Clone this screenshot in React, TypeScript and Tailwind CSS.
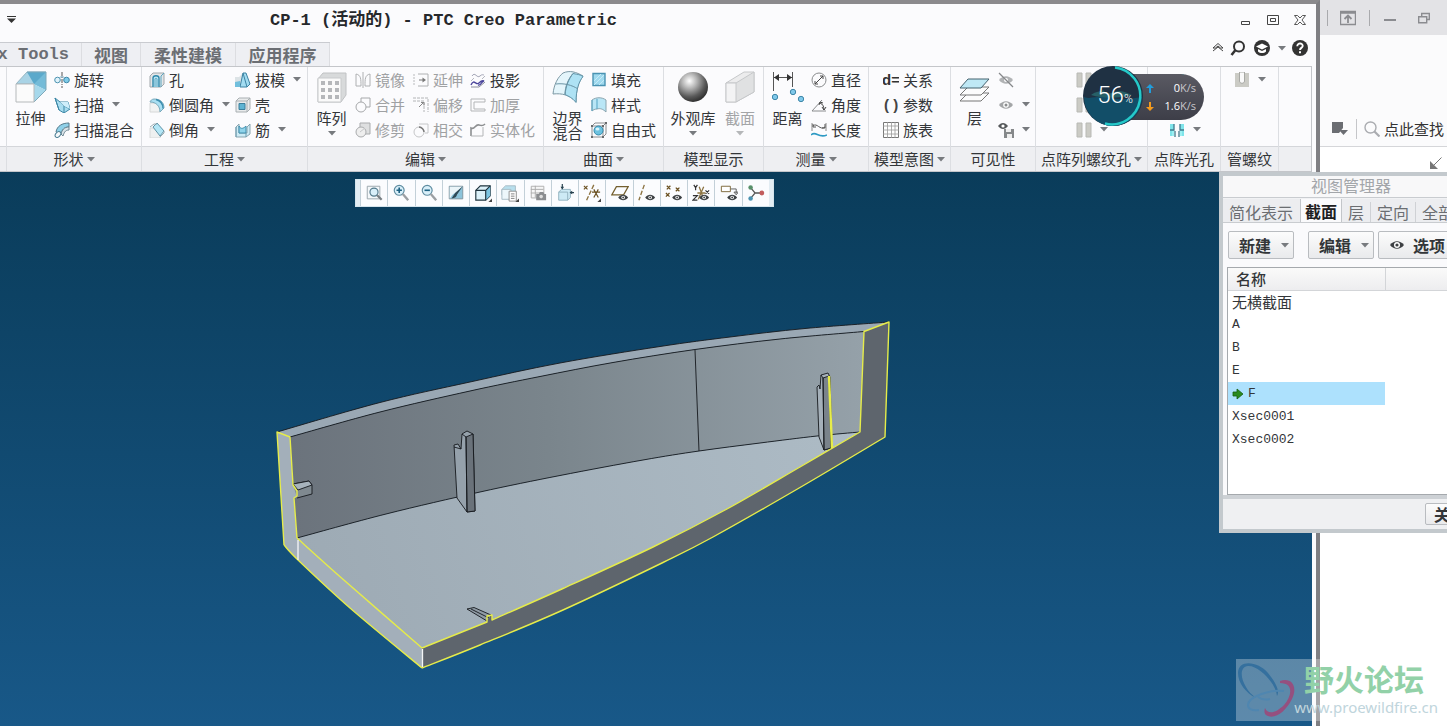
import type { ReactNode } from "react";

type Point = [number, number];

/* ---------- shared pieces ---------- */

function Caret({ className = "text-[#777a7e]" }: { className?: string }) {
  return (
    <svg width="8" height="5" viewBox="0 0 8 5" className={"shrink-0 " + className} aria-hidden="true">
      <path d="M0 0h8L4 4.6z" fill="currentColor" />
    </svg>
  );
}

function Ico({ children, size = 16, box = 16 }: { children: ReactNode; size?: number; box?: number }) {
  return (
    <svg width={size} height={size} viewBox={`0 0 ${box} ${box}`} fill="none" className="shrink-0" aria-hidden="true">
      {children}
    </svg>
  );
}

/* ---------- ribbon icons ---------- */

const small: Record<string, ReactNode> = {
  revolve: (
    <>
      <path d="M8 0v16" stroke="#555" strokeDasharray="4 1 1 1" />
      <circle cx="3.5" cy="8" r="2.8" fill="#dff2fa" stroke="#4b92b0" />
      <circle cx="12.5" cy="8" r="2.8" fill="#7fcbe8" stroke="#3c87a8" />
      <path d="M5.5 5.5C7 4.5 9 4.5 10.5 5.5" stroke="#7aa7bb" />
    </>
  ),
  sweep: (
    <>
      <path d="M1 1l5 4h8l2 7-6 4-5-3z" fill="#a9ddf0" stroke="#3b86a5" />
      <path d="M6 5l4 4 6 3M10 9l0 7M1 1l4 12" stroke="#3b86a5" />
      <path d="M6 5h8l2 7-6-3z" fill="#cfeefa" />
    </>
  ),
  blend: (
    <>
      <path d="M2 10C3 4 8 1 15 1v4C10 5 8 8 7 12z" fill="#8fd0e8" stroke="#55798a" />
      <path d="M7 12c1-4 3-7 8-7v3c-4 0-5 3-6 6z" fill="#d9e3e8" stroke="#6d8793" />
      <ellipse cx="4" cy="12.5" rx="3.3" ry="2.3" transform="rotate(-45 4 12.500)" fill="#f4f8fa" stroke="#4b7d93" />
    </>
  ),
  hole: (
    <>
      <path d="M1 4l3-3h11v11l-3 3H1z" fill="#e3e6e8" stroke="#a0a6aa" />
      <path d="M4 15V6c0-3 6-3 6 0v9" fill="#bfe8f6" stroke="#2f89ab" strokeWidth="1.400" />
      <path d="M6 15V7c0-1 2-1 2 0v8M12 4v11M12 4l3-3" stroke="#5aa5c0" />
    </>
  ),
  round: (
    <>
      <path d="M1 6h7c2 1 3 4 3 9H1z" fill="#f1f2f2" stroke="#d6d8d8" />
      <path d="M1 5c0-1 2-3 4-3 6 0 10 3 10 9l-4 4C11 9 7 5 1 5z" fill="#a9dff2" stroke="#7aa9bb" />
      <path d="M7 2.500c4 1 7 4 7 9" stroke="#3c8dae" strokeWidth="1.400" />
    </>
  ),
  chamfer: (
    <>
      <path d="M1 6h5l5 5v5H1z" fill="#eef0f0" stroke="#d6d8d8" />
      <path d="M4 5l4-4 7 8-4 5z" fill="#b3e6f6" stroke="#5f94a8" />
      <path d="M1 5l4-3h3M11 15l4-4V9" stroke="#9aabb2" />
    </>
  ),
  draft: (
    <>
      <path d="M0 5h4l3-3h3L6 9v6H0z" fill="#dce3e6" />
      <path d="M8 1l3 0 4 11-3 3H5z" fill="#a2dcf1" stroke="#3c83a3" />
      <path d="M8 1l4 14" stroke="#3c83a3" />
      <path d="M0 10l5-1v6H0z" fill="#72bfdd" />
    </>
  ),
  shell: (
    <>
      <path d="M1 4l3-3h11v11l-3 3H1z" fill="#e9ebec" stroke="#a9afb2" />
      <path d="M1 4h11v11M12 4l3-3" stroke="#a9afb2" />
      <path d="M4 6.500h6v6H4z" fill="#5fb4d3" stroke="#3c7f9c" />
    </>
  ),
  rib: (
    <>
      <path d="M1 5l3-3v9h8V5l3-3v10l-4 3H1z" fill="#cdebf5" stroke="#8aa5b0" />
      <path d="M4 4c2 4 5 2 7 0v7H4z" fill="#8fd3ea" stroke="#3d8cac" />
      <path d="M1 5v10M11 15v-4" stroke="#6c9cb0" />
    </>
  ),
  mirror: <path d="M1 2c5 1 5 5 5 12H1zM15 2c-5 1-5 5-5 12h5zM8 0v16" stroke="#aeb0b2" />,
  merge: (
    <>
      <path d="M6 1h9v9h-4M6 1v4" stroke="#a6a8aa" />
      <circle cx="6" cy="10" r="5" stroke="#a6a8aa" />
    </>
  ),
  trim: (
    <>
      <path d="M5 1h10v11H5z" fill="#dedfe0" stroke="#a9abad" />
      <circle cx="6" cy="10" r="5" fill="#eeeeee" stroke="#a9abad" />
      <path d="M5 10l5-4" stroke="#c5c6c8" />
    </>
  ),
  extend: (
    <>
      <path d="M5 2h10v12H5" stroke="#aeb0b2" />
      <path d="M1 2v12" stroke="#b8babc" strokeDasharray="2 1" />
      <path d="M6 8h5" stroke="#777" />
      <path d="M9.500 5.500L13 8l-3.500 2.500z" fill="#777" />
    </>
  ),
  offset: (
    <>
      <path d="M0 1h15v14M0 4h11v11" stroke="#b2b4b6" strokeDasharray="3 1" />
      <path d="M6 10l4-4M8 5.500h3v3" stroke="#888" />
    </>
  ),
  intersect: (
    <>
      <path d="M6 2h9v9h-3" stroke="#c5c6c8" />
      <circle cx="6" cy="10" r="5" stroke="#c5c6c8" />
      <path d="M6 5c3 0 5 3 5 5" stroke="#777" strokeWidth="1.400" />
    </>
  ),
  project: (
    <>
      <path d="M2 4c3-5 5 3 8 0 2-2 3-1 4-1" stroke="#a2a4b5" />
      <path d="M1 9l3-3M12 7l3-3" stroke="#b5b7c0" />
      <path d="M1 13c3-7 5 1 8-2 2-2 3-3 5-2-3 0-2 5-6 4" stroke="#4b459b" strokeWidth="1.400" />
      <path d="M1 15h8l6-5" stroke="#8a8c99" />
    </>
  ),
  thicken: <path d="M15 2H1v12h14v-2H4V5h11z" stroke="#b3b5b7" />,
  solidify: (
    <>
      <path d="M1 14V6c4 2 4-4 8-3 3 1 4 1 6-1" stroke="#8d8f91" strokeWidth="1.600" />
      <path d="M1 14h12V5" stroke="#b3b5b7" />
    </>
  ),
  fill: (
    <>
      <path d="M2 1.500h12v12H2z" fill="#9fd9ee" stroke="#4a93b2" strokeWidth="1.400" />
      <path d="M3 9l7-7M3 13L13 3M8 13l5-5" stroke="#c6ebf7" />
    </>
  ),
  style: (
    <>
      <path d="M1 3c4-3 10-3 14 0v12c-3-3-6-4-9-3-2 0-4 1-5 2z" fill="#b9e6f6" stroke="#8ba4ae" />
      <path d="M6 12V2M1 14V3" stroke="#52a3c3" />
    </>
  ),
  freestyle: (
    <>
      <path d="M1 4l3-3h11v11l-3 3H1zM1 4h11v11M12 4l3-3" stroke="#8a8c8e" />
      <circle cx="7.500" cy="8.500" r="4.500" fill="#6cc2e0" stroke="#3388aa" />
      <ellipse cx="6.500" cy="7" rx="2" ry="1.500" fill="#d8f3fb" />
      <path d="M0 3h2v2H0zM11 3h2v2h-2zM0 14h2v2H0zM11 14h2v2h-2zM14 0h2v2h-2z" fill="#66696b" />
    </>
  ),
  diameter: (
    <>
      <circle cx="8" cy="8" r="7" stroke="#8a8c8e" />
      <path d="M4 12l8-8M4 9v3h3M9 4h3v3" stroke="#444" />
    </>
  ),
  angle: (
    <>
      <path d="M15 14H1L11 3" stroke="#8a8c8e" />
      <path d="M9 6c3 1 4 4 4 7M8 8l1-3 3 1M11 10l2 3 2-3" stroke="#444" />
    </>
  ),
  length: (
    <>
      <path d="M1 1v8M15 1v8" stroke="#888" />
      <path d="M2 4c4-4 7 5 12 1M2 2v3h3M14 2v4h-3" stroke="#555" />
      <path d="M0 13c5-5 7 4 16 0" stroke="#2e9ac4" strokeWidth="1.600" />
    </>
  ),
  table: (
    <>
      <path d="M.5 .5h15v15H.5z" fill="#fff" stroke="#777" />
      <path d="M0 4h16M0 8h16M0 12h16M4.500 0v16M8.500 0v16M12 0v16" stroke="#999" strokeWidth=".8" />
    </>
  ),
  eyeOff: (
    <>
      <path d="M1 8c4-5 10-5 14 0-4 5-10 5-14 0z" fill="#b1b3b5" />
      <circle cx="8" cy="8" r="2" fill="#fff" />
      <path d="M1 1l14 14" stroke="#85878a" strokeWidth="1.300" />
    </>
  ),
  eye: (
    <>
      <path d="M1 8c4-5 10-5 14 0-4 5-10 5-14 0z" fill="#a3a5a7" />
      <circle cx="8" cy="8" r="2.800" fill="#fff" />
      <circle cx="8" cy="8" r="1.500" fill="#8b8d8f" />
    </>
  ),
  eyeSave: (
    <>
      <path d="M0 4c3-4 7-4 10 0-3 4-7 4-10 0z" fill="#55585a" />
      <circle cx="5" cy="4" r="1.600" fill="#fff" />
      <path d="M6 7h10v9H6z" fill="#85888a" />
      <path d="M8 7h5v3H8zM9 12h5v4H9z" fill="#eee" />
    </>
  ),
  boreFlat: <path d="M1 1h5v14H1zM10 1h5v14h-5z" fill="#cbcbc5" stroke="#b8b9b5" />,
  bore: (
    <>
      <path d="M1 1h14v14H1z" fill="#cbcbc5" />
      <path d="M5.500 0h5v9c0 3-5 3-5 0z" fill="#fafafa" stroke="#a8a9a5" />
    </>
  ),
  lightBore: (
    <>
      <path d="M1 2h4v12H1zM11 2h4v12h-4z" fill="#7fe4ea" />
      <path d="M5 2v6H1M11 2v6h4M6 9v6M10 9v6" stroke="#43798b" strokeWidth="1.300" />
      <path d="M3 9h2v5H3zM11 9h2v5h-2z" fill="#9cf0f2" />
    </>
  ),
  relation: (
    <text x="-1" y="13" fontSize="15" fontWeight="700" fontFamily="Liberation Sans, sans-serif" fill="#333">d=</text>
  ),
  params: (
    <text x="1" y="13" fontSize="15" fontWeight="700" fontFamily="Liberation Sans, sans-serif" fill="#444">( )</text>
  ),
};

const large: Record<string, ReactNode> = {
  extrude: (
    <>
      <path d="M1 13L12 1h19L19 13z" fill="#a9d3e5" stroke="#97b7c4" />
      <path d="M12 1h19v18L19 13z" fill="#5ba9cb" />
      <path d="M31 1L19 13l12 6z" fill="#74bbd8" />
      <path d="M19 31V13l12 6z" fill="#a6d8eb" />
      <path d="M12 1h19v18L19 31" stroke="#7fa9ba" />
      <path d="M1 13h18v18H1z" fill="#fbfbfb" stroke="#b5b9bb" />
    </>
  ),
  pattern: (
    <>
      <path d="M2 8l5-6h23v22l-5 7H2z" fill="#d8dadb" stroke="#c0c2c4" />
      <path d="M2 7h23v24H2z" fill="#fafafa" stroke="#c8cacc" />
      <path d="M5 10h4v4H5zM12 10h4v4h-4zM19 10h4v4h-4zM5 17h4v4H5zM12 17h4v4h-4zM19 17h4v4h-4zM5 24h4v4H5zM12 24h4v4h-4zM19 24h4v4h-4z" fill="#b5b7ba" />
    </>
  ),
  boundary: (
    <>
      <path d="M1 23C2 13 6 6 11 2c7-3 13-1 20 3-4 5-7 13-7 26-6-7-14-9-23-8z" fill="#e4f5fb" stroke="#7c98a4" />
      <path d="M21 2.500c5 1 7 1 10 3-4 5-7 13-7 26-4-5-7-6-11-8 1-9 4-16 8-21z" fill="#aee2f4" stroke="#5f93a8" />
      <path d="M4 13c8-1 16 1 22 5M21 2.500c-5 6-8 13-8 21" stroke="#6a93a4" />
    </>
  ),
  sphere: (
    <>
      <defs>
        <radialGradient id="ball" cx=".38" cy=".3" r=".7">
          <stop offset="0" stopColor="#ffffff" />
          <stop offset=".35" stopColor="#b5b5b5" />
          <stop offset=".75" stopColor="#5a5a5a" />
          <stop offset="1" stopColor="#333333" />
        </radialGradient>
      </defs>
      <circle cx="16" cy="16" r="15" fill="url(#ball)" />
    </>
  ),
  section: (
    <>
      <path d="M2 12L20 1h10v20L12 31H2z" fill="#ececed" stroke="#c6c8ca" />
      <path d="M2 12h10L30 1v20L12 31z" fill="#e0e1e2" stroke="#c6c8ca" />
      <path d="M2 12h10v19H2z" fill="#f3f3f4" stroke="#c6c8ca" />
    </>
  ),
  distance: (
    <>
      <path d="M1.500 1v19M20.500 1v15M2 6.500h18" stroke="#555" />
      <path d="M2 6.500l5-3.500v7zM20 6.500l-5-3.500v7z" fill="#333" />
      <circle cx="3" cy="26" r="2.700" fill="#7fc8ea" stroke="#3f87a9" />
      <circle cx="21" cy="21" r="2.700" fill="#7fc8ea" stroke="#3f87a9" />
      <circle cx="29" cy="28" r="2.700" fill="#7fc8ea" stroke="#3f87a9" />
    </>
  ),
  layers: (
    <>
      <path d="M1 30l8-8h21l-8 8z" fill="#fcfcfc" stroke="#777" />
      <path d="M1 24l8-8h21l-8 8z" fill="#fcfcfc" stroke="#777" />
      <path d="M1 17l8-9h21l-8 9z" fill="#bfe8f5" stroke="#44626f" />
    </>
  ),
};

function Tool({ icon, label, name, caret, dim }: { icon: string; label?: string; name?: string; caret?: boolean; dim?: boolean }) {
  return (
    <button type="button" aria-label={name} disabled={dim} className={"flex h-[25px] items-center gap-1 whitespace-nowrap text-[15px] leading-5 " + (dim ? "text-[#9fa1a3]" : "text-[#333639]")}>
      <Ico>{small[icon]}</Ico>
      {label}
      {caret && <span className="ml-1"><Caret /></span>}
    </button>
  );
}

function BigTool({ icon, lines, caret, dim, width }: { icon: string; lines: string[]; caret?: boolean; dim?: boolean; width: string }) {
  return (
    <button type="button" disabled={dim} className={"flex shrink-0 flex-col items-center pt-1 text-[15px] leading-[15px] " + width + (dim ? " text-[#a3a5a7]" : " text-[#333639]")}>
      <Ico size={32} box={32}>{large[icon]}</Ico>
      <span className="mt-[7px] flex flex-col whitespace-nowrap">
        {lines.map((l) => <span key={l}>{l}</span>)}
      </span>
      {caret && <span className="mt-1.5"><Caret className={dim ? "text-[#b5b7b9]" : "text-[#777a7e]"} /></span>}
    </button>
  );
}

function Group({ title, caret, width, children }: { title: string; caret?: boolean; width: string; children?: ReactNode }) {
  return (
    <section aria-label={title} className={"flex shrink-0 flex-col border-r border-[#dcdee2] " + width}>
      <div className="flex h-[79px] items-start">{children}</div>
      <div className="flex h-[25px] items-center justify-center gap-[3px] border-t border-[#d4d6da] bg-[#eeeff2] text-[15px] leading-5 whitespace-nowrap text-[#333639]">
        {title}
        {caret && <Caret />}
      </div>
    </section>
  );
}

function Column({ width = "", children }: { width?: string; children: ReactNode }) {
  return <div className={"flex shrink-0 flex-col items-start " + width}>{children}</div>;
}

function Ribbon() {
  return (
    <div className="mr-1 flex h-[106px] border-y border-r border-[#c4c6ca] bg-[#fbfbfd]">
      <Group title="" width="w-[7px]" />
      <Group title="形状" caret width="w-[135px]">
        <BigTool icon="extrude" lines={["拉伸"]} width="w-[47px]" />
        <Column>
          <Tool icon="revolve" label="旋转" />
          <Tool icon="sweep" label="扫描" caret />
          <Tool icon="blend" label="扫描混合" />
        </Column>
      </Group>
      <Group title="工程" caret width="w-[166px]">
        <Column width="w-[93px] pl-[7px]">
          <Tool icon="hole" label="孔" />
          <Tool icon="round" label="倒圆角" caret />
          <Tool icon="chamfer" label="倒角" caret />
        </Column>
        <Column>
          <Tool icon="draft" label="拔模" caret />
          <Tool icon="shell" label="壳" />
          <Tool icon="rib" label="筋" caret />
        </Column>
      </Group>
      <Group title="编辑" caret width="w-[236px]">
        <BigTool icon="pattern" lines={["阵列"]} caret width="w-[47px]" />
        <Column width="w-[58px]">
          <Tool icon="mirror" label="镜像" dim />
          <Tool icon="merge" label="合并" dim />
          <Tool icon="trim" label="修剪" dim />
        </Column>
        <Column width="w-[57px]">
          <Tool icon="extend" label="延伸" dim />
          <Tool icon="offset" label="偏移" dim />
          <Tool icon="intersect" label="相交" dim />
        </Column>
        <Column>
          <Tool icon="project" label="投影" />
          <Tool icon="thicken" label="加厚" dim />
          <Tool icon="solidify" label="实体化" dim />
        </Column>
      </Group>
      <Group title="曲面" caret width="w-[120px]">
        <BigTool icon="boundary" lines={["边界", "混合"]} width="w-[47px]" />
        <Column>
          <Tool icon="fill" label="填充" />
          <Tool icon="style" label="样式" />
          <Tool icon="freestyle" label="自由式" />
        </Column>
      </Group>
      <Group title="模型显示" width="w-[100px]">
        <BigTool icon="sphere" lines={["外观库"]} caret width="w-[58px]" />
        <BigTool icon="section" lines={["截面"]} caret dim width="w-[36px]" />
      </Group>
      <Group title="测量" caret width="w-[105px]">
        <BigTool icon="distance" lines={["距离"]} width="w-[47px]" />
        <Column>
          <Tool icon="diameter" label="直径" />
          <Tool icon="angle" label="角度" />
          <Tool icon="length" label="长度" />
        </Column>
      </Group>
      <Group title="模型意图" caret width="w-[82px]">
        <Column width="pl-[14px]">
          <Tool icon="relation" label="关系" />
          <Tool icon="params" label="参数" />
          <Tool icon="table" label="族表" />
        </Column>
      </Group>
      <Group title="可见性" width="w-[85px]">
        <BigTool icon="layers" lines={["层"]} width="w-[47px]" />
        <Column>
          <Tool icon="eyeOff" name="隐藏" dim />
          <Tool icon="eye" name="显示" caret />
          <Tool icon="eyeSave" name="保存状况" caret />
        </Column>
      </Group>
      <Group title="点阵列螺纹孔" caret width="w-[112px]">
        <Column width="pl-[40px]">
          <Tool icon="boreFlat" name="螺纹孔 1" caret />
          <Tool icon="boreFlat" name="螺纹孔 2" caret />
          <Tool icon="boreFlat" name="螺纹孔 3" caret />
        </Column>
      </Group>
      <Group title="点阵光孔" width="w-[73px]">
        <Column width="pl-[21px]">
          <Tool icon="lightBore" name="光孔 1" />
          <Tool icon="lightBore" name="光孔 2" />
          <Tool icon="lightBore" name="光孔 3" caret />
        </Column>
      </Group>
      <Group title="管螺纹" width="w-[58px]">
        <Column width="pl-[13px]">
          <Tool icon="bore" name="管螺纹孔" caret />
        </Column>
      </Group>
      <div className="flex flex-1 flex-col justify-end">
        <div className="h-[25px] border-t border-[#d4d6da] bg-[#eeeff2]" />
      </div>
    </div>
  );
}

/* ---------- title bar and tabs ---------- */

function TitleBar() {
  return (
    <div className="grid h-8 grid-cols-[270px_1fr_auto] items-center pr-2.5">
      <button type="button" aria-label="自定义快速访问工具栏" className="ml-[7px] w-4">
        <svg width="9" height="8" viewBox="0 0 9 8" aria-hidden="true">
          <path d="M0 .5h9" stroke="#333" />
          <path d="M0 2.500h9L4.500 7z" fill="#333" />
        </svg>
      </button>
      <h1 className="pt-0.5 font-['Liberation_Mono','Noto_Sans_CJK_SC',monospace] text-[17px] leading-6 font-bold whitespace-nowrap text-[#26282b]">CP-1 (活动的) - PTC Creo Parametric</h1>
      <div className="flex items-center gap-[15px] text-[#444]">
        <button type="button" aria-label="最小化"><Ico size={12} box={12}><path d="M1.500 7.500h8v3h-8z" stroke="currentColor" /></Ico></button>
        <button type="button" aria-label="最大化"><Ico size={12} box={12}><path d="M.5 1.500h11v9H.5zM3.500 4.500h5v3h-5z" stroke="currentColor" /></Ico></button>
        <button type="button" aria-label="关闭">
          <Ico size={12} box={12}><path d="M.5 1.500h3L6 4l2.500-2.500h3L8 6l3.500 4.500h-3L6 8l-2.500 2.500h-3L4 6z" stroke="currentColor" strokeWidth=".9" /></Ico>
        </button>
      </div>
    </div>
  );
}

function TabRow() {
  const tab = "h-full border-r border-[#dcdde1] whitespace-nowrap";
  return (
    <div className="flex h-[30px] justify-between">
      <div role="tablist" className="flex h-6 self-end overflow-hidden border-t border-[#c9cbd0] bg-[#eeeff3] text-[17px] leading-[22px] font-bold text-[#6b6e73]">
        <button role="tab" type="button" className={tab + " flex w-[82px] items-center justify-end pr-3 font-['Liberation_Mono',monospace]"}>x Tools</button>
        <button role="tab" type="button" className={tab + " w-[59px]"}>视图</button>
        <button role="tab" type="button" className={tab + " w-[95px]"}>柔性建模</button>
        <button role="tab" type="button" className={tab + " w-[94px]"}>应用程序</button>
      </div>
      <div className="mt-1 mr-2 flex h-4 items-center gap-1.5 text-[#333]">
        <button type="button" aria-label="最小化功能区">
          <Ico size={12} box={12}><path d="M1 6l5-4.500L11 6H8.500L6 4 3.500 6zM1 9l5-4 5 4" stroke="currentColor" strokeWidth=".9" /></Ico>
        </button>
        <button type="button" aria-label="搜索">
          <Ico><circle cx="9" cy="6.500" r="5" stroke="currentColor" strokeWidth="2" /><path d="M5.500 10L1.500 15" stroke="currentColor" strokeWidth="2.600" /></Ico>
        </button>
        <button type="button" aria-label="学习" className="ml-0.5 flex items-center gap-2">
          <Ico><circle cx="8" cy="8" r="8" fill="currentColor" /><path d="M2 6.500l6-3 6 3-6 3z" fill="#fff" /><path d="M4 9l4 2 4-2v2.500c-2 2-6 2-8 0z" fill="#fff" /></Ico>
          <Caret />
        </button>
        <button type="button" aria-label="帮助">
          <Ico><circle cx="8" cy="8" r="8" fill="currentColor" /><path d="M5.300 6.200c0-3.800 5.600-3.500 5.400-.2C10.600 8 8 7.800 8 10" stroke="#fff" strokeWidth="1.900" /><path d="M7 11.300h2v2H7z" fill="#fff" /></Ico>
        </button>
      </div>
    </div>
  );
}

/* ---------- graphics toolbar ---------- */

const eyeMark = (
  <>
    <path d="M8 15c3-4 8-4 11 0-3 4-8 4-11 0z" fill="#3d4144" />
    <circle cx="13.500" cy="15" r="2" fill="#fff" />
    <circle cx="13.500" cy="15" r="1" fill="#3d4144" />
  </>
);
const corner = <path d="M20 16v4h-4z" fill="#444" />;

const viewTools: [string, ReactNode][] = [
  ["重新调整", <><path d="M2.500 2.500h14v14h-14z" fill="#f4f8fa" stroke="#96a2a8" /><circle cx="10" cy="9" r="4.500" fill="#d8eff9" stroke="#52798b" strokeWidth="1.300" /><path d="M13.500 12.500l5 5" stroke="#777e82" strokeWidth="2.400" /></>],
  ["放大", <><circle cx="8" cy="7" r="5.500" fill="#d8eff9" stroke="#5f8ca0" strokeWidth="1.300" /><path d="M5 7h6M8 4v6" stroke="#1c6082" strokeWidth="1.800" /><path d="M12 11l6 7" stroke="#9b9fa3" strokeWidth="2.600" /></>],
  ["缩小", <><circle cx="8" cy="7" r="5.500" fill="#d8eff9" stroke="#5f8ca0" strokeWidth="1.300" /><path d="M5 7h6" stroke="#1c6082" strokeWidth="1.800" /><path d="M12 11l6 7" stroke="#9b9fa3" strokeWidth="2.600" /></>],
  ["重画", <><path d="M2.500 2.500h15v14h-15z" fill="#8cc3da" stroke="#7f929b" /><path d="M3 3h14L9 10c-3 1-4 4-6 6z" fill="#eaf4f8" /><path d="M17.500 2.500L9 10l-4 6c4 0 6-2 6-4z" fill="#2f4a57" /></>],
  ["显示样式", <><path d="M2 7l5-5h11v11l-5 5H2z" fill="#dcf1f9" stroke="#20343e" strokeWidth="1.300" /><path d="M13 7l5-5v11l-5 5z" fill="#7cc5e2" /><path d="M2 7h11v11M13 7l5-5" stroke="#20343e" strokeWidth="1.300" />{corner}</>],
  ["已保存方向", <><path d="M1 6l4-4h11v10H1z" fill="#b8dfed" stroke="#a5bac3" /><path d="M1 6h10v11H1z" fill="#edf7fb" stroke="#a5bac3" /><path d="M9 8h8v11H9z" fill="#fff" stroke="#888" /><path d="M11 11h4M11 13.500h4M11 16h4" stroke="#777" />{corner}</>],
  ["视图管理器", <><path d="M2.500 2.500h14v13h-14zM7 2v13M2 6h14M2 10h14" fill="#f6f6f6" stroke="#aaa" /><path d="M8 11h3l1-2h4l1 2h2v7H8z" fill="#8b8d90" /><circle cx="13.500" cy="14" r="2" fill="#ddd" /></>],
  ["透视图", <><path d="M3 9l3-3h10v9l-3 3H3z" fill="#cdeaf5" stroke="#8fb0bd" /><path d="M3 9h10v9" stroke="#8fb0bd" /><path d="M7 0v5M20 9.500h-4" stroke="#26404d" strokeWidth="1.300" /><path d="M5 3l2 3 2-3zM18 7.500l-3 2 3 2z" fill="#26404d" /></>],
  ["基准显示过滤器", <><path d="M1 2l4 4M5 2L1 6M10 9h9M12 6l5 9M17 6l-5 9" stroke="#6a5020" strokeWidth="1.300" /><path d="M12 1L4 18" stroke="#8c7341" strokeWidth="1.500" strokeDasharray="5 2" />{corner}</>],
  ["平面显示", <><path d="M6 3h13l-5 9H1z" stroke="#75602f" strokeWidth="1.400" />{eyeMark}</>],
  ["轴显示", <><path d="M7 1L1 18" stroke="#8c7341" strokeWidth="1.500" strokeDasharray="5 2" />{eyeMark}</>],
  ["点显示", <><path d="M2 2l4 4M6 2L2 6M12 4l4 4M16 4l-4 4M1 10l4 4M5 10l-4 4" stroke="#6a5020" strokeWidth="1.400" />{eyeMark}</>],
  ["坐标系显示", <><path d="M2 1l2 3 2-3M4 4v3M1 13h5l-5 5h5M15 7l4 4M19 7l-4 4" stroke="#333" strokeWidth="1.300" /><path d="M6 10h9M8 3l5 14M13 3L7 17" stroke="#8c7341" strokeWidth="1.400" />{eyeMark}</>],
  ["注释显示", <><path d="M1.500 2.500h10v6h-10z" fill="#fff" stroke="#75602f" /><path d="M12 5.500h6v5M15.500 9h5L18 12z" stroke="#555" />{eyeMark}</>],
  ["旋转中心", <><path d="M4 4l5 6-5 6M9 10h7" stroke="#555" strokeWidth="1.400" /><circle cx="4" cy="4" r="2.500" fill="#58906a" /><circle cx="4" cy="16" r="2.500" fill="#4a92b0" /><circle cx="16.500" cy="10" r="2.700" fill="#c25d5d" /></>],
];

function ViewToolbar() {
  return (
    <div role="toolbar" aria-label="图形工具栏" className="absolute top-[7px] left-[355px] flex h-7 w-[419px] border border-[#d5e4ec] bg-[#e3edf3] px-1">
      {viewTools.map(([name, art]) => (
        <button key={name} type="button" aria-label={name} className="flex flex-1 items-center justify-center border-l border-[#c3d0d8] bg-[#fbfcfe]">
          <Ico size={18} box={20}>{art}</Ico>
        </button>
      ))}
    </div>
  );
}

/* ---------- 3D part ---------- */

function curve(pts: Point[], start: "M" | "L" = "M") {
  let d = `${start}${pts[0][0]} ${pts[0][1]}`;
  for (let i = 0; i < pts.length - 1; i++) {
    const a = pts[Math.max(i - 1, 0)];
    const b = pts[i];
    const c = pts[i + 1];
    const e = pts[Math.min(i + 2, pts.length - 1)];
    d += ` C${b[0] + (c[0] - a[0]) / 6} ${b[1] + (c[1] - a[1]) / 6} ${c[0] - (e[0] - b[0]) / 6} ${c[1] - (e[1] - b[1]) / 6} ${c[0]} ${c[1]}`;
  }
  return d;
}

const rev = (p: Point[]) => [...p].reverse();
const rimOuter: Point[] = [[277, 432], [380, 402.5], [470, 382], [560, 363], [660, 346.5], [730, 337], [805, 328.5], [889, 322]];
const rimInner: Point[] = [[290, 437], [380, 412], [470, 391], [540, 376.5], [613, 362.5], [695, 349.5], [780, 339], [864, 331.5]];
const wallFoot: Point[] = [[297, 538], [386, 514], [480, 492], [560, 475.5], [643, 460], [699, 451], [760, 443], [817, 436], [860, 432]];
const cutInner: Point[] = [[492, 620], [563, 588.5], [653, 547], [727, 509], [800, 467], [860, 432]];
const cutOuter: Point[] = [[422, 668], [480, 645], [563, 610], [663, 562.5], [713, 537], [800, 487.5], [885, 437]];
const sideInner: Point[] = [[297, 538], [345, 581], [422, 648]];
const sideOuter: Point[] = [[284, 545], [298, 560], [350, 608], [422, 668]];

function Part() {
  const yellow = "#e6ec4a";
  const edge = "#15191d";
  const notch = "M422 648 L487 622 L487 616 L492 615 L492 620";
  return (
    <svg width="1312" height="554" viewBox="0 172 1312 554" fill="none" className="absolute top-0 left-0" role="img" aria-label="CP-1 模型">
      <defs>
        <linearGradient id="wall" x1="290" y1="0" x2="864" y2="0" gradientUnits="userSpaceOnUse">
          <stop offset="0" stopColor="#6b737c" />
          <stop offset=".45" stopColor="#7a858c" />
          <stop offset="1" stopColor="#95a1a9" />
        </linearGradient>
        <linearGradient id="floor" x1="300" y1="600" x2="860" y2="440" gradientUnits="userSpaceOnUse">
          <stop offset="0" stopColor="#9daab4" />
          <stop offset="1" stopColor="#adbbc5" />
        </linearGradient>
      </defs>
      <path d={curve(rimOuter) + curve(rev(rimInner), "L") + "Z"} fill="#9aa8b4" />
      <path d={curve(rimInner) + curve(rev(wallFoot), "L") + "Z"} fill="url(#wall)" />
      <path d={curve(wallFoot) + curve(rev(cutInner), "L") + " L422 648" + curve(rev(sideInner), "L") + "Z"} fill="url(#floor)" />
      <path d={notch + curve(cutInner, "L") + " L864 331.500 L889 322 L885 437" + curve(rev(cutOuter), "L") + "Z"} fill="#5e656d" />
      <path d={curve(sideInner) + curve(rev(sideOuter), "L") + "Z"} fill="#a3afba" />
      <path d="M277 432L290 437 293 485 297 491V496L294 498 297 538 298 560 284 545Z" fill="#a3afba" />

      <g stroke={edge} strokeWidth=".9">
        <path d={curve(rimOuter)} />
        <path d={curve(rimInner)} />
        <path d={curve(wallFoot)} />
        <path d="M695 350L699 451" />
        <path d="M293 484L309 481 312 485V494L297 498" fill="#7f8990" />
        <path d="M293 484L309 481 312 485 298 490Z" fill="#a7b3bc" />
        <path d="M454 445L458 444 461 449 462 434 467 431 473 434 475 511 467 512 457 498Z" fill="#95a1ab" />
        <path d="M466 437L473 434 475 511 467 512Z" fill="#6a727a" />
        <path d="M462 434L466 437 467 512M461 449L454 447" />
        <path d="M817 387L819 385 820 389 821 375 828 373 830 377 832 448 824 450 819 437Z" fill="#a5b0b9" />
        <path d="M823 378L829 376 831 448 824 450Z" fill="#7a838b" />
        <path d="M821 375L823 378 824 450" />
        <path d="M487 621L467 609 474 607.500 491 615M471 609L489 618" fill="#8f9ba5" />
      </g>

      <g stroke={yellow} strokeWidth="1.400" strokeLinejoin="round">
        <path d="M297 538L294 498 297 496V491L293 485 290 437 277 432 284 545" />
        <path d={curve(sideInner)} />
        <path d={curve(sideOuter)} />
        <path d={notch + curve(cutInner, "L") + " L864 331.500 L889 322 L885 437" + curve(rev(cutOuter), "L")} />
        <path d="M829 376L832 448" strokeWidth="2.400" />
      </g>
      <path d="M298 540V560M422.500 649V667" stroke="#f4f6f7" strokeWidth="1.300" />
    </svg>
  );
}

/* ---------- view manager dialog ---------- */

const sections = ["无横截面", "A", "B", "E", "F", "Xsec0001", "Xsec0002"];

function ViewManager() {
  const btn = "flex items-center rounded-[2px] border border-[#b9bcc0] bg-linear-to-b from-[#fcfcfc] to-[#e9eaec] text-[16px] leading-5 font-bold whitespace-nowrap text-[#333639]";
  const tab = "border-r border-[#cfd1d5] px-1.5";
  return (
    <div role="dialog" aria-label="视图管理器" className="absolute top-[172px] -right-9 flex w-[264px] flex-col border-4 border-[#c3c9cd] bg-[#f1f2f4]">
      <h2 className="h-[22px] border-b border-[#c9ccd0] bg-[#f8f8f9] text-center text-[16px] leading-[18px] text-[#a3a6aa]">视图管理器</h2>
      <div role="tablist" className="mt-px flex h-6 items-end overflow-hidden border-b border-[#c9ccd0] bg-[#ecedf0] text-[16px] leading-5 whitespace-nowrap text-[#6b6e72]">
        <button role="tab" type="button" className="w-[77px] px-1.5 text-left">简化表示</button>
        <button role="tab" type="button" aria-selected="true" className="h-6 w-[42px] border-x border-t border-[#c3c6ca] bg-[#fafafc] font-bold text-[#1e2022]">截面</button>
        <button role="tab" type="button" className={tab + " w-[29px]"}>层</button>
        <button role="tab" type="button" className={tab + " w-[45px]"}>定向</button>
        <button role="tab" type="button" className={tab}>全部</button>
      </div>
      <div className="bg-[#fafafc] pt-2 pl-1">
        <div className="flex pl-px">
          <button type="button" className={btn + " mr-3.5 h-7 w-[66px] justify-between pr-1 pl-2.5"}>新建<Caret /></button>
          <button type="button" className={btn + " mr-1 h-7 w-[66px] justify-between pr-1 pl-2.5"}>编辑<Caret /></button>
          <button type="button" className={btn + " h-7 w-[100px] gap-2 pl-2.5"}>
            <Ico><path d="M1 8c4-5 10-5 14 0-4 5-10 5-14 0z" fill="#3d4043" /><circle cx="8" cy="8" r="3" fill="#fff" /><circle cx="8" cy="8" r="1.600" fill="#3d4043" /></Ico>
            选项
          </button>
        </div>
        <div className="mt-2 h-[228px] border border-[#a5a9ad] bg-white">
          <table className="w-full table-fixed border-collapse text-left text-[13px] leading-5 text-[#333639]">
            <thead>
              <tr className="h-[22px] bg-linear-to-b from-[#fafafa] to-[#ededef]">
                <th className="w-[157px] border-r border-b border-[#d3d5d8] p-0 pl-2 text-[15px] font-medium">名称</th>
                <th className="border-b border-[#d3d5d8] p-0" aria-label="状况" />
              </tr>
            </thead>
            <tbody>
              {sections.map((s) => (
                <tr key={s} className="h-[23px]">
                  <td className={"p-0 pl-1 " + (s === "F" ? "bg-[#ade1fd]" : "") + (s === "无横截面" ? " text-[15px]" : " font-['Liberation_Mono',monospace]")}>
                    <span className="flex items-center gap-1">
                      {s === "F" && (
                        <svg width="12" height="12" viewBox="0 0 12 12" aria-hidden="true">
                          <path d="M1 4h4V1l6 5-6 5V8H1z" fill="#2a8a1e" stroke="#175d10" strokeWidth=".8" />
                        </svg>
                      )}
                      {s}
                    </span>
                  </td>
                  <td className="p-0" />
                </tr>
              ))}
            </tbody>
          </table>
        </div>
      </div>
      <div className="flex h-[34px] items-center justify-end border-t-4 border-[#cdd1d5] bg-[#eff0f2] pr-1">
        <button type="button" className={btn + " h-[22px] w-[50px] justify-center"}>关闭</button>
      </div>
    </div>
  );
}

/* ---------- network meter and watermark ---------- */

function NetMeter() {
  return (
    <div className="absolute top-[66px] right-[243px] flex h-[60px] w-[121px] items-center">
      <div className="mt-0.5 ml-[30px] flex h-[46px] flex-1 flex-col justify-center gap-0.5 rounded-r-full bg-linear-to-b from-[#5a5a63] to-[#3d3e48] pr-2 font-['Open_Sans','Noto_Sans',sans-serif] text-[11px] leading-4 text-white">
        <div className="flex items-center justify-end">
          <svg width="8" height="9" viewBox="0 0 8 9" className="mr-auto ml-[33px]" aria-label="上传"><path d="M4 0l4 4H5v5H3V4H0z" fill="#219ddc" /></svg>
          0<span className="text-[#c5c5ca]">K/s</span>
        </div>
        <div className="flex items-center justify-end">
          <svg width="8" height="9" viewBox="0 0 8 9" className="mr-auto ml-[33px]" aria-label="下载"><path d="M4 9l4-4H5V0H3v5H0z" fill="#f39a1d" /></svg>
          1.6<span className="text-[#c5c5ca]">K/s</span>
        </div>
      </div>
      <div className="absolute top-0 left-0 flex size-[60px] items-center justify-center">
        <svg width="60" height="60" viewBox="0 0 60 60" className="absolute" aria-hidden="true">
          <circle cx="30" cy="30" r="30" fill="#1f3143" />
          <path d="M1 31c8 3 14-3 28 1 12 3 20 0 30-1a29 29 0 0 1-58 0z" fill="#124e68" />
          <path d="M8 29c5-4 9-3 12-5 3 4 8 4 12 2 6-3 12 1 17 3-12 3-28 4-41 0z" fill="#276067" />
          <path d="M32 1.500a28.500 28.500 0 1 1-10 56" fill="none" stroke="#25c9c9" strokeWidth="2.500" />
        </svg>
        <span className="relative flex items-baseline pt-0.5 pl-1 font-['Roboto',sans-serif] text-[24px] leading-7 font-light text-white">56<span className="text-[12px]">%</span></span>
      </div>
    </div>
  );
}

function Watermark() {
  return (
    <div className="absolute right-[7px] bottom-[5px] flex h-[62px] w-[204px] justify-between bg-white/30">
      <svg width="64" height="62" viewBox="0 0 64 62" fill="none" className="shrink-0" aria-hidden="true">
        <path d="M2 14C2 0 22 2 32 14 40 24 44 32 41 37 40 24 22 6 12 7 4 8 4 18 10 28 12 32 16 36 20 39 10 34 2 24 2 14Z" fill="#35709e" />
        <path d="M48 32C34 30 12 38 12 46c0 4 4 6 11 5M22 38c4 3 8 3 12 2" stroke="#4f86b0" strokeWidth="2" />
        <path d="M44 22C56 18 62 28 56 40 50 52 40 60 32 57 28 56 28 52 29 49 32 56 40 54 48 46 56 37 58 24 44 24Z" fill="#95507f" />
      </svg>
      <div className="-ml-8 flex shrink-0 flex-col items-end pr-0.5">
        <span className="mr-3.5 text-[30px] leading-[38px] font-bold whitespace-nowrap text-[#92d1a8]">野火论坛</span>
        <span className="font-['Noto_Sans',sans-serif] text-[15px] leading-5 whitespace-nowrap text-[#c0d5dc]">www.proewildfire.cn</span>
      </div>
    </div>
  );
}

/* ---------- window behind ---------- */

function BackWindow() {
  return (
    <aside className="flex w-[127px] shrink-0 flex-col overflow-hidden bg-white">
      <div className="flex h-[35px] shrink-0 items-center bg-[#e3e3e6] pl-[7px] text-[#8b8c90]">
        <span className="mr-3 h-4 w-px bg-[#a9aaad]" />
        <button type="button" aria-label="置顶">
          <Ico><path d="M.5 1.500h15v13H.5zM0 3h16" stroke="currentColor" strokeWidth="1.400" /><path d="M8 13V6M4.500 9L8 5.500 11.500 9" stroke="currentColor" strokeWidth="1.800" /></Ico>
        </button>
        <span className="ml-[13px] h-4 w-px bg-[#a9aaad]" />
        <button type="button" aria-label="最小化" className="mt-1 ml-3.5 h-0.5 w-3 bg-[#8b8c90]" />
        <button type="button" aria-label="还原" className="ml-[22px]">
          <Ico size={12} box={12}><path d="M.7 4.700h8v6h-8zM3.700 4V1.500h7.600v6H9" stroke="currentColor" strokeWidth="1.400" /></Ico>
        </button>
      </div>
      <div className="flex h-[112px] shrink-0 items-end border-b border-[#d5d6d9] bg-[#fbfbfc] pb-[7px] pl-3">
        <button type="button" aria-label="筛选" className="mb-0.5">
          <Ico><path d="M0 1h11v6L7 12H0z" fill="#6b6d72" /><path d="M7 9h9l-4.500 5z" fill="#6b6d72" /></Ico>
        </button>
        <span className="ml-2 h-5 w-px bg-[#c5c6c9]" />
        <button type="button" className="ml-[7px] flex items-center gap-1 text-[15px] leading-5 whitespace-nowrap text-[#333]">
          <Ico><circle cx="6.500" cy="6.500" r="5.500" stroke="#aaacb0" strokeWidth="1.400" /><path d="M10.500 10.500l5 5" stroke="#aaacb0" strokeWidth="2.200" /></Ico>
          点此查找
        </button>
      </div>
      <div className="flex justify-end pt-2.5 pr-[5px]">
        <svg width="12" height="12" viewBox="0 0 12 12" fill="none" aria-hidden="true">
          <path d="M11.500 .5L3 9" stroke="#777" /><path d="M0 4l8 8H0z" fill="#777" />
        </svg>
      </div>
    </aside>
  );
}

export default function App() {
  return (
    <div className="relative flex h-screen min-h-[560px] overflow-hidden bg-white font-['Noto_Sans_CJK_SC',sans-serif]">
      <main className="flex min-w-0 flex-1 flex-col border-t-4 border-r-4 border-t-[#8b8a8d] border-r-[#7f7f83] bg-[#fbfbfd]">
        <TitleBar />
        <TabRow />
        <Ribbon />
        <div className="relative mr-1 min-h-0 flex-1 overflow-hidden bg-linear-to-b from-[#0a3c5a] to-[#185888]">
          <Part />
          <ViewToolbar />
        </div>
      </main>
      <BackWindow />
      <ViewManager />
      <NetMeter />
      <Watermark />
    </div>
  );
}
